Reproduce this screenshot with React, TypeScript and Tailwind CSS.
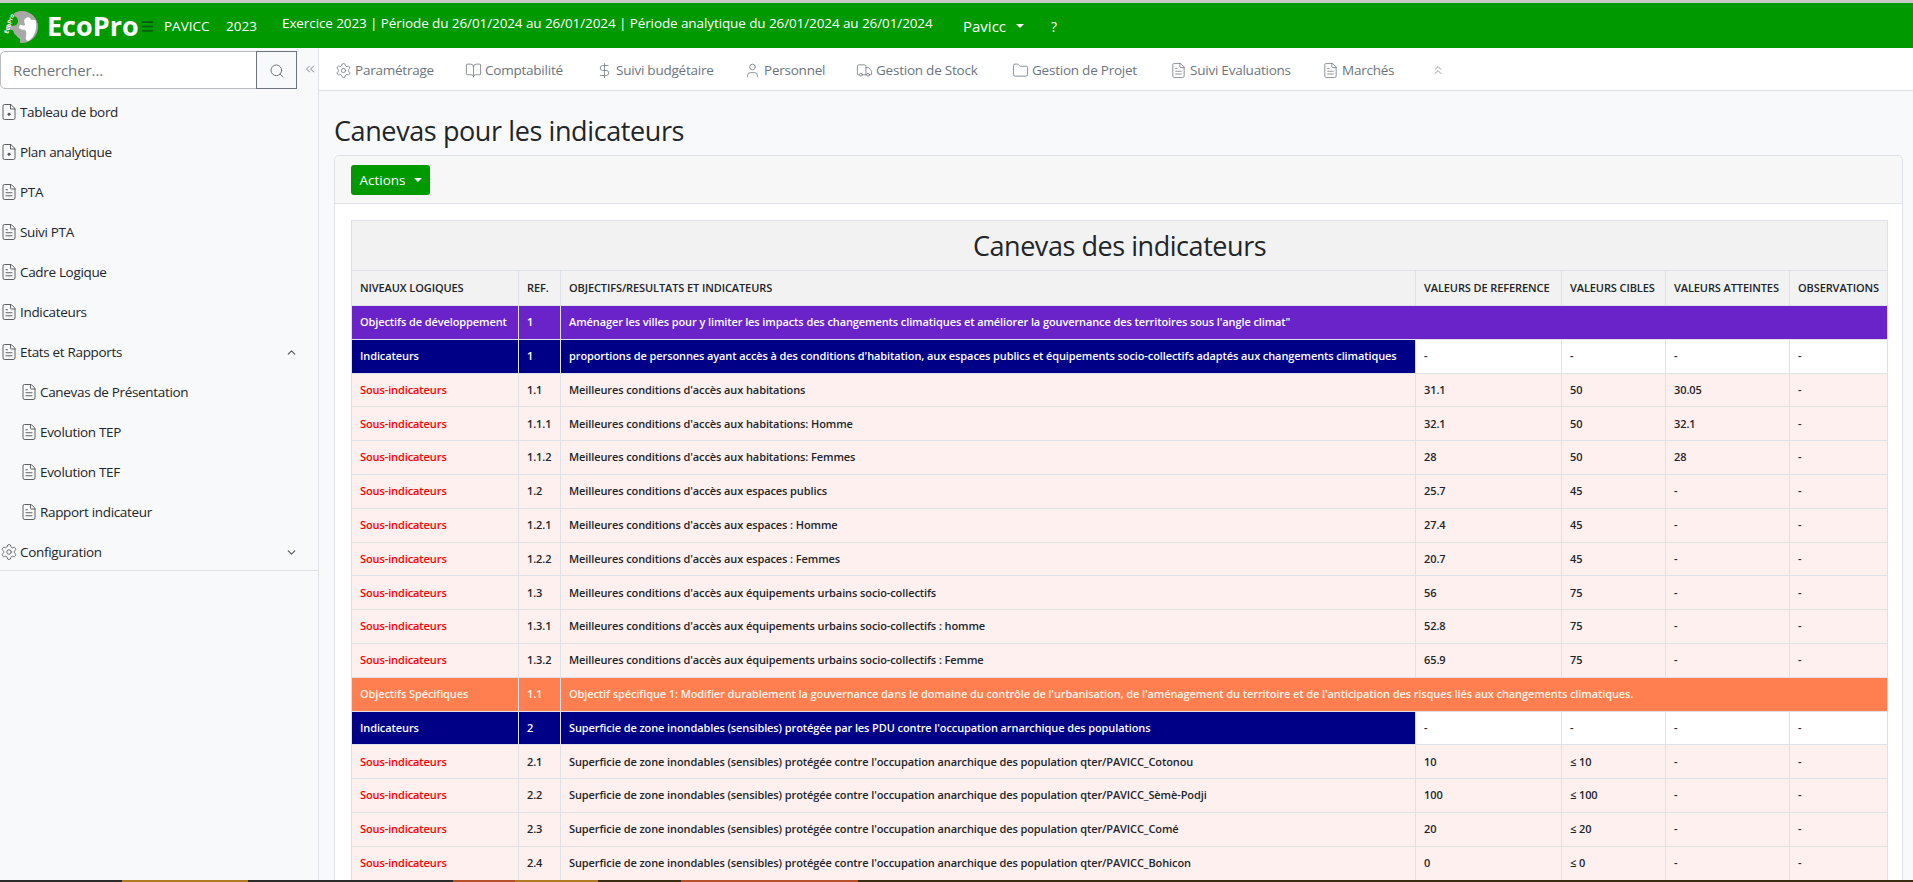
import { ChevronDown, ChevronUp, ChevronsLeft, ChevronsUp, BookOpen, DollarSign, FileText, Folder, Menu, Search, Settings, Truck, User } from 'lucide-react';
import type { SVGProps } from 'react';

// fichier avec un point au centre (Tableau de bord, Plan analytique)
function FileDot(props: SVGProps<SVGSVGElement> & { strokeWidth?: number }) {
    return (
        <svg viewBox="0 0 24 24" fill="none" stroke="currentColor" strokeLinecap="round" strokeLinejoin="round" {...props}>
            <path d="M14 2H6a2 2 0 0 0-2 2v16a2 2 0 0 0 2 2h12a2 2 0 0 0 2-2V8z" />
            <path d="M14 2v6h6" />
            <circle cx="12" cy="15" r="1.5" fill="currentColor" />
        </svg>
    );
}

const sideTop = [
    { label: 'Tableau de bord', icon: FileDot },
    { label: 'Plan analytique', icon: FileDot },
    { label: 'PTA', icon: FileText },
    { label: 'Suivi PTA', icon: FileText },
    { label: 'Cadre Logique', icon: FileText },
    { label: 'Indicateurs', icon: FileText },
];

const sideSub = ['Canevas de Présentation', 'Evolution TEP', 'Evolution TEF', 'Rapport indicateur'];

const tabs = [
    { label: 'Paramétrage', icon: Settings, w: 'w-[130px]' },
    { label: 'Comptabilité', icon: BookOpen, w: 'w-[131px]' },
    { label: 'Suivi budgétaire', icon: DollarSign, w: 'w-[148px]' },
    { label: 'Personnel', icon: User, w: 'w-[112px]' },
    { label: 'Gestion de Stock', icon: Truck, w: 'w-[156px]' },
    { label: 'Gestion de Projet', icon: Folder, w: 'w-[158px]' },
    { label: 'Suivi Evaluations', icon: FileText, w: 'w-[152px]' },
    { label: 'Marchés', icon: FileText, w: 'w-[109px]' },
];

type Row = { kind: 'sub' | 'ind' | 'spec' | 'dev'; level: string; ref: string; text: string; vals?: string[] };

const rows: Row[] = [
    { kind: 'dev', level: 'Objectifs de développement', ref: '1', text: "Aménager les villes pour y limiter les impacts des changements climatiques et améliorer la gouvernance des territoires sous l'angle climat\"" },
    { kind: 'ind', level: 'Indicateurs', ref: '1', text: "proportions de personnes ayant accès à des conditions d'habitation, aux espaces publics et équipements socio-collectifs adaptés aux changements climatiques", vals: ['-', '-', '-', '-'] },
    { kind: 'sub', level: 'Sous-indicateurs', ref: '1.1', text: "Meilleures conditions d'accès aux habitations", vals: ['31.1', '50', '30.05', '-'] },
    { kind: 'sub', level: 'Sous-indicateurs', ref: '1.1.1', text: "Meilleures conditions d'accès aux habitations: Homme", vals: ['32.1', '50', '32.1', '-'] },
    { kind: 'sub', level: 'Sous-indicateurs', ref: '1.1.2', text: "Meilleures conditions d'accès aux habitations: Femmes", vals: ['28', '50', '28', '-'] },
    { kind: 'sub', level: 'Sous-indicateurs', ref: '1.2', text: "Meilleures conditions d'accès aux espaces publics", vals: ['25.7', '45', '-', '-'] },
    { kind: 'sub', level: 'Sous-indicateurs', ref: '1.2.1', text: "Meilleures conditions d'accès aux espaces : Homme", vals: ['27.4', '45', '-', '-'] },
    { kind: 'sub', level: 'Sous-indicateurs', ref: '1.2.2', text: "Meilleures conditions d'accès aux espaces : Femmes", vals: ['20.7', '45', '-', '-'] },
    { kind: 'sub', level: 'Sous-indicateurs', ref: '1.3', text: "Meilleures conditions d'accès aux équipements urbains socio-collectifs", vals: ['56', '75', '-', '-'] },
    { kind: 'sub', level: 'Sous-indicateurs', ref: '1.3.1', text: "Meilleures conditions d'accès aux équipements urbains socio-collectifs : homme", vals: ['52.8', '75', '-', '-'] },
    { kind: 'sub', level: 'Sous-indicateurs', ref: '1.3.2', text: "Meilleures conditions d'accès aux équipements urbains socio-collectifs : Femme", vals: ['65.9', '75', '-', '-'] },
    { kind: 'spec', level: 'Objectifs Spécifiques', ref: '1.1', text: "Objectif spécifique 1: Modifier durablement la gouvernance dans le domaine du contrôle de l'urbanisation, de l'aménagement du territoire et de l'anticipation des risques liés aux changements climatiques." },
    { kind: 'ind', level: 'Indicateurs', ref: '2', text: "Superficie de zone inondables (sensibles) protégée par les PDU contre l'occupation arnarchique des populations", vals: ['-', '-', '-', '-'] },
    { kind: 'sub', level: 'Sous-indicateurs', ref: '2.1', text: "Superficie de zone inondables (sensibles) protégée contre l'occupation anarchique des population qter/PAVICC_Cotonou", vals: ['10', '≤ 10', '-', '-'] },
    { kind: 'sub', level: 'Sous-indicateurs', ref: '2.2', text: "Superficie de zone inondables (sensibles) protégée contre l'occupation anarchique des population qter/PAVICC_Sèmè-Podji", vals: ['100', '≤ 100', '-', '-'] },
    { kind: 'sub', level: 'Sous-indicateurs', ref: '2.3', text: "Superficie de zone inondables (sensibles) protégée contre l'occupation anarchique des population qter/PAVICC_Comé", vals: ['20', '≤ 20', '-', '-'] },
    { kind: 'sub', level: 'Sous-indicateurs', ref: '2.4', text: "Superficie de zone inondables (sensibles) protégée contre l'occupation anarchique des population qter/PAVICC_Bohicon", vals: ['0', '≤ 0', '-', '-'] },
];

const rowStyle: Record<Row['kind'], string> = {
    dev: 'bg-[#6a23c8] text-white',
    ind: 'bg-[#000087] text-white',
    spec: 'bg-[#ff7f50] text-[#fff3e8]',
    sub: 'bg-[#fff0f0] text-[#212529]',
};

const heads = ['NIVEAUX LOGIQUES', 'REF.', 'OBJECTIFS/RESULTATS ET INDICATEURS', 'VALEURS DE REFERENCE', 'VALEURS CIBLES', 'VALEURS ATTEINTES', 'OBSERVATIONS'];

function Logo() {
    return (
        <svg width="40" height="38" viewBox="0 6 40 38" className="shrink-0">
            <circle cx="22" cy="26" r="16" fill="#a8a8a8" />
            <circle cx="13" cy="20" r="5" fill="#009900" />
            <path d="M5 14 L12 8 L15 16 L11 24 L5 24 Z" fill="#009900" />
            <path d="M6 30 Q12 27 15 31 Q16 36 20 38 L20 44 L4 44 Z" fill="#009900" />
            <path d="M13 29 Q18 26 21 30 L19 35 Q14 35 13 29 Z" fill="#a8a8a8" />
            <path d="M24 19 q3 -4 6 -2 l1 2 q3 -1 5 1 q1 8 -2 14 q-3 5 -6 6 q-3 -1 -2 -5 q1 -4 -1 -6 q-4 0 -6 -2 q0 -4 3 -3 q2 1 3 0 z" fill="#fff" />
            <text x="8" y="33" transform="rotate(-72 8 33)" fontSize="6" fontWeight="700" fill="#fff">EcoPro</text>
        </svg>
    );
}

function Header() {
    return (
        <header className="h-[48px] shrink-0 border-t-[3px] border-[#c9c9c9] bg-[#009900] text-white flex items-center">
            <div className="w-[47px]"><Logo /></div>
            <span className="text-[27px] leading-none font-bold w-[93px]">EcoPro</span>
            <Menu className="w-[15px] h-[15px] text-[#045f04] mt-[1px]" strokeWidth={2.5} />
            <span className="ml-[9px] w-[62px] text-[13.5px] mt-[1px]">PAVICC</span>
            <span className="w-[56px] text-[13.5px] mt-[1px]">2023</span>
            <span className="w-[681px] text-[13.5px] tracking-[-0.1px] -mt-[4px] whitespace-nowrap">Exercice 2023 | Période du 26/01/2024 au 26/01/2024 | Période analytique du 26/01/2024 au 26/01/2024</span>
            <span className="text-[15px] mt-[1px] flex items-center gap-[10px]">
                Pavicc
                <span className="border-x-[4px] border-t-[4px] border-x-transparent border-t-white" />
            </span>
            <span className="ml-[27px] text-[14px] mt-[1px]">?</span>
        </header>
    );
}

function Sidebar() {
    return (
        <aside className="w-[334px] shrink-0 relative">
            <div className="flex items-start w-[319px] pt-[3px]">
                <div className="flex w-[298px] h-[38px]">
                    <div className="w-[257px] bg-white border border-[#b8bcc0] rounded-l-[5px] pl-[12px] flex items-center text-[15px] tracking-[-0.1px] text-[#6c757d]">Rechercher...</div>
                    <div className="w-[41px] -ml-px border border-[#6c757d] flex items-center justify-center">
                        <Search className="w-[16px] h-[16px] text-[#6c757d] mt-[2px]" strokeWidth={1.5} />
                    </div>
                </div>
                <ChevronsLeft className="w-[14px] h-[14px] text-[#6c757d] ml-[5px] mt-[11px]" strokeWidth={1.5} />
            </div>
            <nav className="w-[319px] border-r border-b border-[#dee2e6] text-[13.5px] tracking-[-0.33px] text-[#212529] pt-[2px] mt-[1px]">
                {sideTop.map((it) => (
                    <div key={it.label} className="h-[40px] flex items-center">
                        <it.icon className="w-[18px] h-[18px] text-[#555]" strokeWidth={1.25} />
                        <span className="ml-[2px]">{it.label}</span>
                    </div>
                ))}
                <div className="h-[40px] flex items-center">
                    <FileText className="w-[18px] h-[18px] text-[#555]" strokeWidth={1.25} />
                    <span className="ml-[2px]">Etats et Rapports</span>
                    <ChevronUp className="w-[13px] h-[13px] ml-auto mr-[20px] text-[#555]" />
                </div>
                {sideSub.map((s) => (
                    <div key={s} className="h-[40px] flex items-center pl-[20px]">
                        <FileText className="w-[18px] h-[18px] text-[#555]" strokeWidth={1.25} />
                        <span className="ml-[2px]">{s}</span>
                    </div>
                ))}
                <div className="h-[38px] flex items-start pt-[2px]">
                    <div className="h-[36px] flex items-center w-full">
                        <Settings className="w-[18px] h-[18px] text-[#555]" strokeWidth={1.1} />
                        <span className="ml-[2px]">Configuration</span>
                        <ChevronDown className="w-[13px] h-[13px] ml-auto mr-[20px] text-[#555]" />
                    </div>
                </div>
            </nav>
            <div className="absolute left-[318px] top-0 bottom-0 w-px bg-[#dee2e6]" />
        </aside>
    );
}

function Tabs() {
    return (
        <div className="h-[43px] -ml-[15px] pl-[16px] pt-[2px] bg-white border-b border-[#dee2e6] flex items-center text-[13.5px] tracking-[-0.23px] text-[#6c757d]">
            {tabs.map((t) => (
                <div key={t.label} className={`${t.w} flex items-center shrink-0`}>
                    <t.icon className="w-[17px] h-[17px] mr-[3px]" strokeWidth={1.1} />
                    <span className="whitespace-nowrap">{t.label}</span>
                </div>
            ))}
            <ChevronsUp className="w-[14px] h-[14px]" strokeWidth={1.25} />
        </div>
    );
}

function Table() {
    return (
        <table className="w-[1536px] table-fixed border-collapse text-[11px] tracking-[-0.1px] font-semibold text-[#212529]">
            <colgroup>
                <col className="w-[167px]" />
                <col className="w-[42px]" />
                <col className="w-[855px]" />
                <col className="w-[146px]" />
                <col className="w-[104px]" />
                <col className="w-[124px]" />
                <col className="w-[98px]" />
            </colgroup>
            <thead>
                <tr>
                    <th colSpan={7} className="h-[50px] pt-[2px] bg-[#f2f2f2] border border-[#dee2e6] text-[27px] tracking-[-0.45px] font-normal text-center align-middle">Canevas des indicateurs</th>
                </tr>
                <tr>
                    {heads.map((h) => (
                        <th key={h} className="h-[35px] bg-[#f2f2f2] border border-[#dee2e6] px-[8px] text-left font-semibold whitespace-nowrap">{h}</th>
                    ))}
                </tr>
            </thead>
            <tbody>
                {rows.map((r, i) => (
                    <tr key={i} className="h-[33.8px]">
                        <td className={`${rowStyle[r.kind]} border border-[#dee2e6] px-[8px] ${r.kind === 'sub' ? 'text-[#ff0000]' : ''}`}>{r.level}</td>
                        <td className={`${rowStyle[r.kind]} border border-[#dee2e6] px-[8px]`}>{r.ref}</td>
                        <td colSpan={r.vals ? 1 : 5} className={`${rowStyle[r.kind]} border border-[#dee2e6] px-[8px] whitespace-nowrap`}>{r.text}</td>
                        {r.vals && r.vals.map((v, j) => (
                            <td key={j} className={`${r.kind === 'ind' ? 'bg-white' : 'bg-[#fff0f0]'} border border-[#dee2e6] px-[8px]`}>{v}</td>
                        ))}
                    </tr>
                ))}
            </tbody>
        </table>
    );
}

export default function App() {
    return (
        <div className="h-[882px] overflow-hidden bg-[#f8f9fa] flex flex-col relative font-['Open_Sans',sans-serif]">
            <Header />
            <div className="flex flex-1 min-h-0">
                <Sidebar />
                <main className="flex-1 min-w-0">
                    <Tabs />
                    <h3 className="text-[27px] tracking-[-0.4px] leading-[34px] text-[#212529] mt-[23px]">Canevas pour les indicateurs</h3>
                    <div className="mt-[7px] mr-[10px] bg-white border border-[#dee2e6] rounded-t-[5px]">
                        <div className="h-[48px] bg-[#f7f7f7] border-b border-[#dee2e6] rounded-t-[5px] pl-[16px] flex items-center">
                            <button className="w-[79px] h-[30px] pt-[1px] bg-[#009900] text-white text-[13.5px] rounded-[3px] flex items-center justify-center gap-[8px]">
                                Actions
                                <span className="border-x-[4px] border-t-[4px] border-x-transparent border-t-white" />
                            </button>
                        </div>
                        <div className="pt-[16px] pl-[16px]">
                            <Table />
                        </div>
                    </div>
                </main>
            </div>
            {/* bande sombre coupée en bas de la capture */}
            <div className="absolute left-0 right-0 bottom-0 h-[2px] flex">
                <div className="w-[122px] bg-[#2b2b2b]" />
                <div className="w-[126px] bg-[#b07a20]" />
                <div className="w-[205px] bg-[#2b2b2b]" />
                <div className="w-[62px] bg-[#b5502a]" />
                <div className="w-[83px] bg-[#b07a20]" />
                <div className="w-[83px] bg-[#3a2c10]" />
                <div className="w-[177px] bg-[#b5502a]" />
                <div className="flex-1 bg-[#3a2c10]" />
            </div>
        </div>
    );
}
